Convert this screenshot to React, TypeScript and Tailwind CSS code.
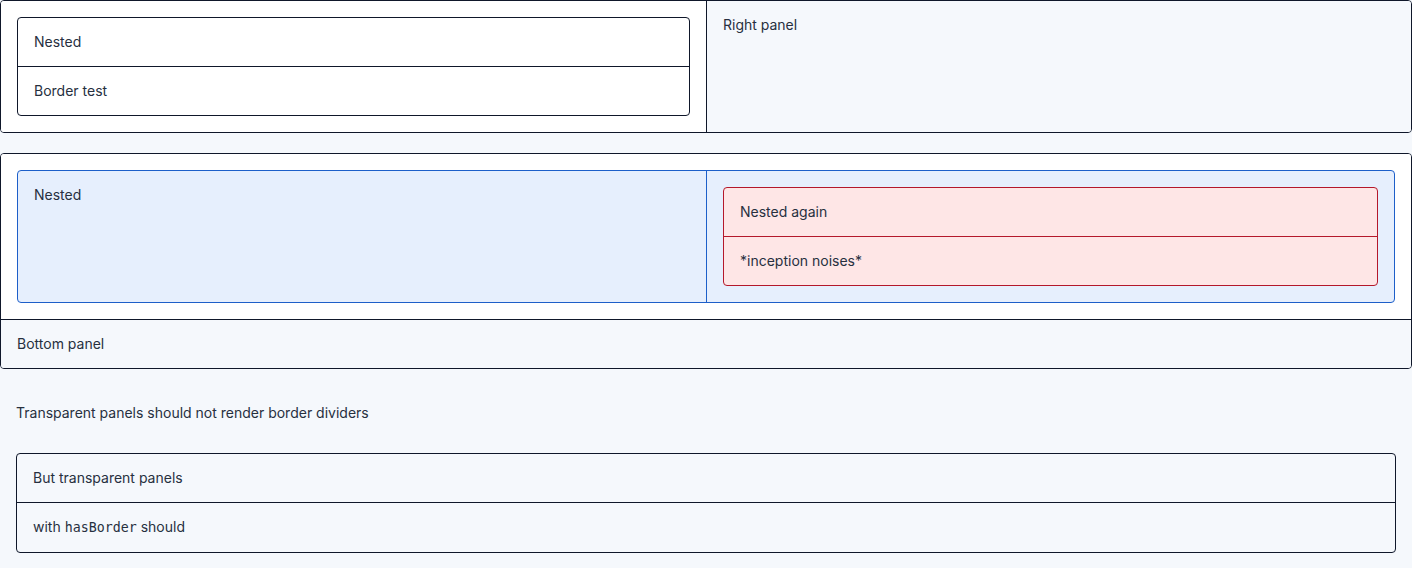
import React from 'react';

const font = { fontFamily: 'Inter, "Noto Sans", sans-serif' };

const Row: React.FC<{ children: React.ReactNode; divider?: string }> = ({ children, divider }) => (
  <div className={`p-4 text-sm leading-4 text-[#27303f] ${divider ?? ''}`}>{children}</div>
);

export default function App() {
  return (
    <div className="min-h-[568px] w-[1412px] bg-[#f5f8fc] text-[#27303f]" style={font}>
      {/* split panel with nested bordered stack */}
      <div className="grid grid-cols-2 rounded border border-[#0f172a] overflow-hidden">
        <div className="bg-white p-4">
          <div className="rounded border border-[#0f172a] bg-white">
            <Row>Nested</Row>
            <Row divider="border-t border-[#0f172a]">Border test</Row>
          </div>
        </div>
        <div className="border-l border-[#0f172a] bg-[#f5f8fc]">
          <Row>Right panel</Row>
        </div>
      </div>

      {/* inception */}
      <div className="mt-5 rounded border border-[#0f172a] overflow-hidden">
        <div className="bg-white p-4">
          <div className="grid grid-cols-2 rounded border border-[#1d5fc9] bg-[#e6effd] overflow-hidden">
            <div>
              <Row>Nested</Row>
            </div>
            <div className="border-l border-[#1d5fc9] p-4">
              <div className="rounded border border-[#b4182b] bg-[#fee6e6]">
                <Row>Nested again</Row>
                <Row divider="border-t border-[#b4182b]">*inception noises*</Row>
              </div>
            </div>
          </div>
        </div>
        <div className="border-t border-[#0f172a] bg-[#f5f8fc]">
          <Row>Bottom panel</Row>
        </div>
      </div>

      {/* transparent panel */}
      <div className="mt-5">
        <Row>Transparent panels should not render border dividers</Row>
        <div className="p-4">
          <div className="rounded border border-[#0f172a]">
            <Row>But transparent panels</Row>
            <Row divider="border-t border-[#0f172a]">
              with{' '}
              <code className="text-[13.3px]" style={{ fontFamily: '"DejaVu Sans Mono", monospace' }}>
                hasBorder
              </code>{' '}
              should
            </Row>
          </div>
        </div>
      </div>
    </div>
  );
}
